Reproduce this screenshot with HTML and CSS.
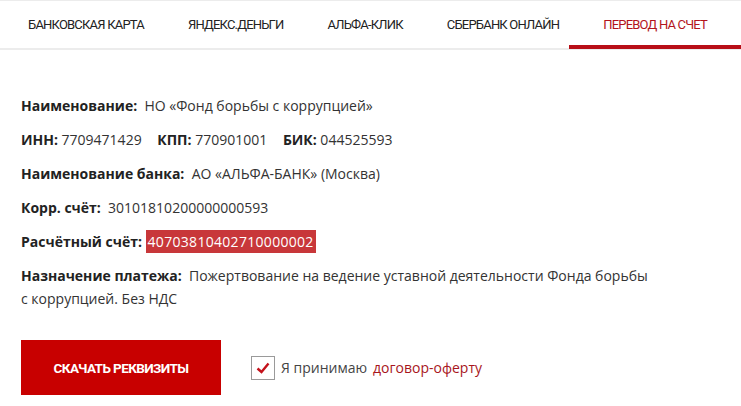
FILE: index.html
```html
<!DOCTYPE html>
<html lang="ru">
<head>
  <meta charset="UTF-8">
  <title>Перевод на счет</title>
  <link rel="stylesheet" href="styles.css">
</head>
<body>

  <nav class="tabs">
    <a class="tab" href="#">Банковская карта</a>
    <a class="tab" href="#">Яндекс.Деньги</a>
    <a class="tab" href="#">Альфа-Клик</a>
    <a class="tab" href="#">Сбербанк Онлайн</a>
    <a class="tab active" href="#">Перевод на счет</a>
  </nav>

  <div class="details">
    <p class="row"><b>Наименование:</b>&nbsp; НО «Фонд борьбы с коррупцией»</p>
    <p class="row"><b>ИНН:</b> 7709471429 <b class="gap">КПП:</b> 770901001 <b class="gap">БИК:</b> 044525593</p>
    <p class="row"><b>Наименование банка:</b>&nbsp; АО «АЛЬФА-БАНК» (Москва)</p>
    <p class="row"><b>Корр. счёт:</b>&nbsp; 30101810200000000593</p>
    <p class="row"><b>Расчётный счёт:</b> <span class="selected">40703810402710000002</span></p>
    <p class="row"><b>Назначение платежа:</b>&nbsp; Пожертвование на ведение уставной деятельности Фонда борьбы с коррупцией. Без НДС</p>
  </div>

  <div class="actions">
    <button class="download" type="button">Скачать реквизиты</button>
    <label class="agree">
      <span class="box">
        <svg width="14" height="12" viewBox="0 0 14 12"><path d="M1.5 6.5 L5.5 10 L12.5 1.5" fill="none" stroke="#c4121b" stroke-width="2.4"/></svg>
      </span>
      Я принимаю <a href="#">договор-оферту</a>
    </label>
  </div>

</body>
</html>
```

FILE: styles.css
```css
body {
  margin: 0;
  font-family: "Open Sans", sans-serif;
  font-size: 14px;
  color: #333;
  background: #fff;
}
.tabs {
  display: flex;
  height: 47px;
  padding-left: 6px;
  border-top: 1px solid #ececec;
  border-bottom: 2px solid #ececec;
}
.tab {
  position: relative;
  padding: 0 22px;
  line-height: 47px;
  white-space: nowrap;
  font-family: "Roboto", sans-serif;
  font-size: 13px;
  letter-spacing: -0.8px;
  text-transform: uppercase;
  text-decoration: none;
  color: #222;
}
.tab.active {
  color: #b3141c;
}
.tab.active::after {
  content: "";
  position: absolute;
  left: -12px;
  right: -12px;
  bottom: -1px;
  height: 4px;
  background: #b80f17;
}
.details {
  max-width: 628px;
  padding: 44px 21px 0;
}
.row {
  margin: 0 0 11px;
  line-height: 23px;
}
.row b {
  color: #222;
}
.row .gap {
  margin-left: 12px;
}
.selected {
  background: #c8373a;
  color: #fff;
  padding: 2px 2px;
  letter-spacing: 0.3px;
}
.actions {
  display: flex;
  align-items: center;
  gap: 30px;
  padding: 19px 21px 0;
}
.download {
  width: 200px;
  height: 55px;
  border: 0;
  background: #c80000;
  color: #fff;
  font-family: "Roboto", sans-serif;
  font-weight: bold;
  font-size: 13.5px;
  letter-spacing: -0.6px;
  text-transform: uppercase;
  cursor: pointer;
}
.agree {
  display: flex;
  align-items: center;
  gap: 6px;
  color: #444;
}
.box {
  display: flex;
  align-items: center;
  justify-content: center;
  width: 22px;
  height: 22px;
  border: 1px solid #9a9a9a;
}
.agree a {
  color: #a8161d;
  text-decoration: none;
}
```
